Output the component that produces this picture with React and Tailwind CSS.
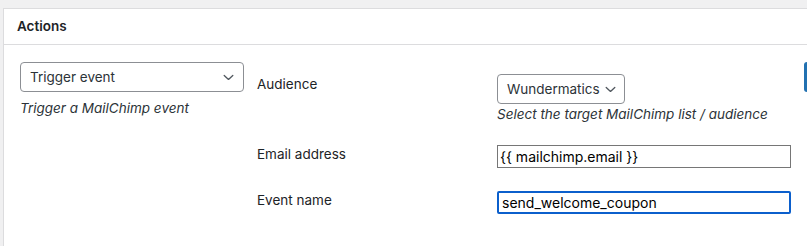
import React from "react";

function Chevron({ className }) {
  return (
    <svg className={className} width="11" height="7" viewBox="0 0 11 7" fill="none">
      <path d="M1.2 1.4 L5.5 5.4 L9.8 1.4" stroke="#50575e" strokeWidth="1.3" strokeLinecap="round" strokeLinejoin="round" />
    </svg>
  );
}

export default function App() {
  return (
    <div
      className="w-[807px] h-[246px] overflow-hidden bg-[#f0f0f1] pt-[8px] pl-[3px]"
      style={{ fontFamily: "Inter, 'Noto Sans', 'Liberation Sans', sans-serif" }}
    >
      <div className="w-[900px] h-[260px] bg-white border-l border-t border-[#dcdcde]">
        <div className="h-[36px] border-b border-[#dcdcde] flex items-center pl-[13px]">
          <span className="text-[13.5px] font-semibold text-[#1d2327]">Actions</span>
        </div>
        <div className="flex items-start pl-[16px] pt-[17px]">
          <div className="w-[224px] shrink-0">
            <div className="h-[30px] border border-[#8c8f94] rounded-[4px] flex items-center justify-between pl-[9px] pr-[9px]">
              <span className="text-[13.5px] text-[#2c3338]">Trigger event</span>
              <Chevron />
            </div>
            <div className="mt-[6px] text-[13.5px] leading-[20px] italic text-[#2c3338]">
              Trigger a MailChimp event
            </div>
          </div>
          <div className="ml-[13px] w-[534px] shrink-0 pt-[11px]">
            <div className="flex items-start">
              <div className="w-[240px] shrink-0 text-[13.5px] leading-[20px] text-[#1d2327] pt-[1px]">Audience</div>
              <div>
                <div className="mt-[1px] h-[30px] w-[128px] border border-[#8c8f94] rounded-[4px] flex items-center justify-between pl-[9px] pr-[8px]">
                  <span className="text-[13.5px] text-[#2c3338]">Wundermatics</span>
                  <Chevron />
                </div>
                <div className="text-[13.5px] leading-[20px] italic text-[#2c3338]">
                  Select the target MailChimp list / audience
                </div>
              </div>
            </div>
            <div className="flex items-start mt-[20px]">
              <div className="w-[240px] shrink-0 text-[13.5px] leading-[20px] text-[#1d2327]">Email address</div>
              <div className="mt-[1px] h-[23px] w-[294px] border border-[#767676] flex items-center pl-[2px] text-[14px] text-black">
                {"{{ mailchimp.email }}"}
              </div>
            </div>
            <div className="flex items-start mt-[22px]">
              <div className="w-[240px] shrink-0 text-[13.5px] leading-[20px] text-[#1d2327]">Event name</div>
              <div className="mt-[1px] h-[23px] w-[294px] border-2 border-[#0b5fcc] rounded-[2px] flex items-center pl-[3px] text-[14px] text-black">
                send_welcome_coupon
              </div>
            </div>
          </div>
          <div className="ml-[13px] w-[80px] h-[30px] shrink-0 rounded-[3px] bg-[#2271b1]"></div>
        </div>
      </div>
    </div>
  );
}
